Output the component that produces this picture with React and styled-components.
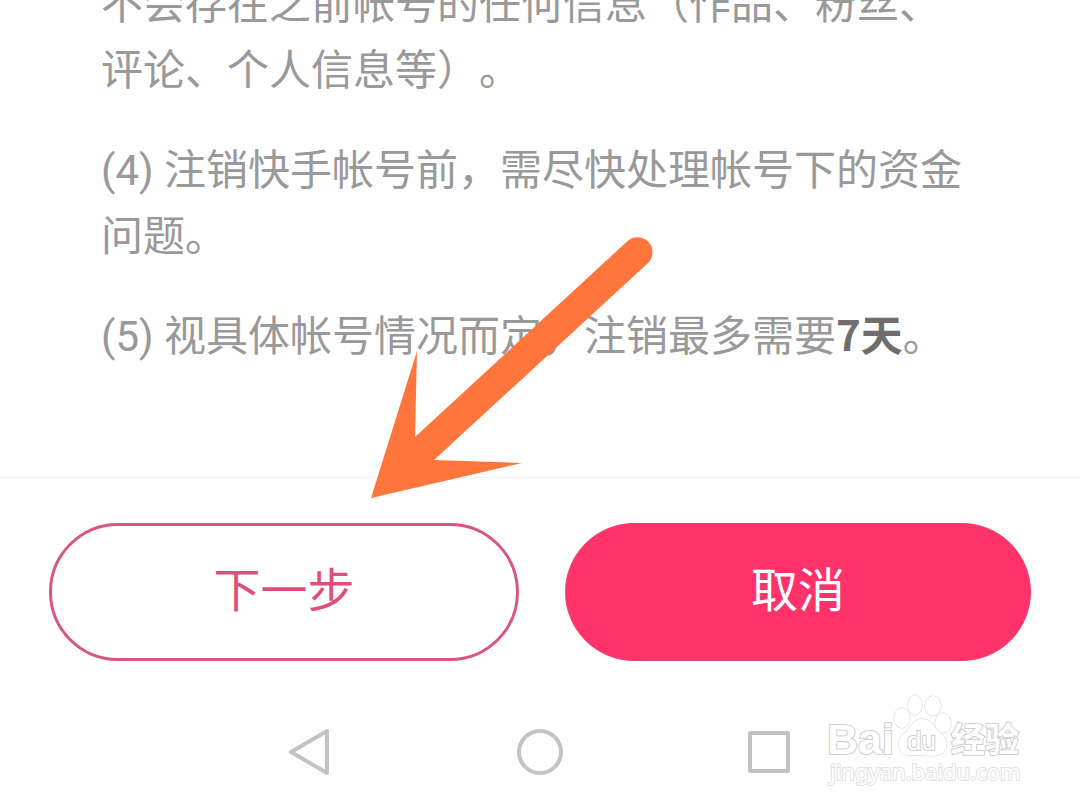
import styled, { createGlobalStyle } from "styled-components";

const GlobalStyle = createGlobalStyle`
  body {
    margin: 0;
    background: #fefefe;
    font-family: Roboto, "Noto Sans CJK SC", sans-serif;
  }
`;

const Page = styled.div`
  position: relative;
  display: flex;
  flex-direction: column;
  height: 100vh;
  overflow: hidden;
`;
const Notice = styled.main`
  display: flex;
  flex: 1;
  flex-direction: column;
  justify-content: flex-end;
  gap: 34px;
  min-height: 0;
  overflow: hidden;
  padding: 0 101px 107px;
`;
const Rule = styled.p`
  margin: 0;
  color: #999;
  font-size: 42px;
  line-height: 66px;
  text-spacing-trim: space-all;
`;
const Days = styled.strong`
  color: #6e6e6e;
  font-family: "Noto Sans CJK SC", sans-serif;
  font-weight: 700;
  line-height: 1;
`;
const Actions = styled.div`
  display: flex;
  gap: 46px;
  padding: 45px 49px 0;
  border-top: 1px solid #f2f2f2;
`;
const ActionButton = styled.button`
  flex: 1;
  height: 138px;
  padding: 0 0 2px;
  border: ${({ $primary }) => ($primary ? "1px solid #e9446f" : "3px solid #d95682")};
  border-radius: 69px;
  background: ${({ $primary }) => ($primary ? "#ff3369" : "transparent")};
  color: ${({ $primary }) => ($primary ? "#fff" : "#e04e7c")};
  font-family: inherit;
  font-size: 47px;
  line-height: 66px;
`;
const NavBar = styled.nav`
  display: flex;
  justify-content: center;
  gap: 182px;
  padding: 67px 0 34px;
`;
const NavButton = styled.button`
  width: 48px;
  height: 48px;
  padding: 0;
  border: none;
  background: none;

  svg {
    display: block;
    fill: none;
    stroke: #c3c3c3;
    stroke-width: 4;
    stroke-linejoin: round;
  }
`;
const Arrow = styled.svg`
  position: absolute;
  top: 236px;
  left: 370px;
  pointer-events: none;
`;
const Watermark = styled.svg`
  position: absolute;
  right: 50px;
  bottom: 14px;
  pointer-events: none;
  fill: #fff;
  stroke: #cfcfcf;
  stroke-width: 1;
  paint-order: stroke;
`;

function Logo() {
  return (
    <Watermark width="210" height="104" viewBox="820 692 210 104" aria-label="Baidu 经验">
      <g fontFamily="Liberation Sans, sans-serif" fontWeight="700" strokeWidth="2">
        <text x="827" y="754" fontSize="43">
          Bai
        </text>
        <text x="951" y="752" fontSize="34" fontFamily="Noto Sans CJK SC, sans-serif">
          经验
        </text>
      </g>
      <ellipse cx="902" cy="718" rx="8" ry="10" />
      <ellipse cx="915" cy="705" rx="7" ry="10" />
      <ellipse cx="933" cy="706" rx="8" ry="10" />
      <ellipse cx="943" cy="723" rx="8" ry="10" />
      <path d="M922 719c-8 0-10 6-15 11-6 6-10 11-8 18 2 8 11 8 23 7 12 2 22 1 24-7 2-8-3-13-9-19-5-5-7-10-15-10z" />
      <text x="907" y="750" fontSize="26" fontFamily="Liberation Sans, sans-serif" strokeWidth="2">
        du
      </text>
      <text x="830" y="780" fontSize="22" fontFamily="Noto Sans, sans-serif" stroke="#e2e2e2" strokeWidth="2">
        jingyan.baidu.com
      </text>
    </Watermark>
  );
}

function App() {
  return (
    <Page lang="zh-CN">
      <GlobalStyle />
      <Notice>
        <Rule>不会存在之前帐号的任何信息（作品、粉丝、评论、个人信息等）。</Rule>
        <Rule>(4) 注销快手帐号前，需尽快处理帐号下的资金问题。</Rule>
        <Rule>
          (5) 视具体帐号情况而定，注销最多需要<Days>7天</Days>。
        </Rule>
      </Notice>
      <Actions>
        <ActionButton type="button">下一步</ActionButton>
        <ActionButton type="button" $primary>
          取消
        </ActionButton>
      </Actions>
      <NavBar>
        <NavButton type="button" aria-label="返回">
          <svg width="48" height="48" viewBox="0 0 48 48">
            <path d="M41 3v42L5 24z" />
          </svg>
        </NavButton>
        <NavButton type="button" aria-label="主页">
          <svg width="48" height="48" viewBox="0 0 48 48">
            <circle cx="24" cy="24" r="21" />
          </svg>
        </NavButton>
        <NavButton type="button" aria-label="最近任务">
          <svg width="48" height="48" viewBox="0 0 48 48">
            <rect x="4" y="5" width="38" height="38" />
          </svg>
        </NavButton>
      </NavBar>
      <Arrow width="284" height="264" viewBox="370 236 284 264">
        <path
          fill="#ff763c"
          d="M371 498L417 351L415 437L627 241.500A15 15 0 0 1 648 263L434 460L522 463Z"
        />
      </Arrow>
      <Logo />
    </Page>
  );
}

export default App;
